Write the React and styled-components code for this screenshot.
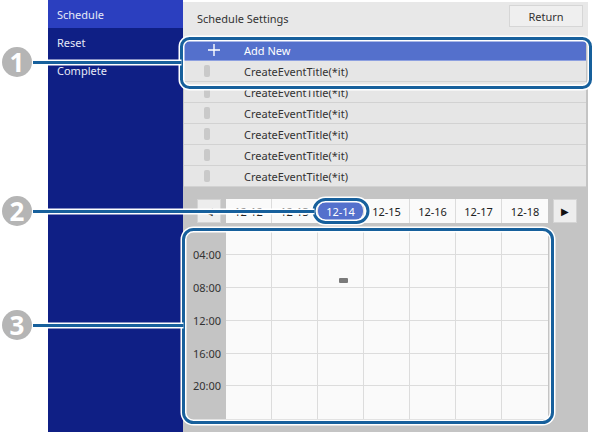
import React from "react";
import styled, { createGlobalStyle } from "styled-components";

const GlobalStyle = createGlobalStyle`
  html, body {
    margin: 0;
    padding: 0;
    background: #fff;
  }
  body {
    font-family: "Noto Sans", "Open Sans", sans-serif;
  }
`;

const days = ["12-12", "12-13", "12-14", "12-15", "12-16", "12-17", "12-18"];
const times = ["04:00", "08:00", "12:00", "16:00", "20:00"];
const rowHeights = [24, 33, 33, 33, 32, 33];

// Page
const Page = styled.div`
  position: relative;
  width: 596px;
  height: 434px;
  display: flex;
  overflow: hidden;
`;

const Gutter = styled.div`
  width: 48px;
  flex-shrink: 0;
`;

// Sidebar
const Sidebar = styled.nav`
  width: 135px;
  height: 432px;
  flex-shrink: 0;
  background: #0f1f85;
  display: flex;
  flex-direction: column;
`;

const NavItem = styled.div`
  height: 28px;
  padding-left: 9px;
  display: flex;
  align-items: center;
  font-size: 11px;
  color: #e6e9f7;
  background: ${(p) => (p.$active ? "#2b3fbf" : "transparent")};
`;

// Main panel
const Main = styled.main`
  width: 405px;
  height: 430px;
  flex-shrink: 0;
  border-top: 2px solid #fff;
  background: #c4c4c4;
  display: flex;
  flex-direction: column;
`;

const Header = styled.div`
  height: 36px;
  background: #e8e8e8;
  display: flex;
  align-items: flex-start;
  justify-content: space-between;
  padding: 3px 5px 0 14px;
  box-sizing: border-box;
`;

const Title = styled.div`
  padding-top: 6px;
  line-height: 16px;
  font-size: 11px;
  color: #333;
`;

const ReturnButton = styled.div`
  width: 74px;
  height: 22px;
  box-sizing: border-box;
  background: #efefef;
  border: 1px solid #d6d6d6;
  display: flex;
  align-items: center;
  justify-content: center;
  font-size: 11px;
  color: #333;
`;

const List = styled.div`
  margin: 2px 2px 0 1px;
  display: flex;
  flex-direction: column;
`;

const ListRow = styled.div`
  height: 20px;
  border-bottom: 1px solid ${(p) => (p.$accent ? "#8da0e0" : "#d2d2d2")};
  background: ${(p) => (p.$accent ? "#5470cc" : "#e6e6e6")};
  color: ${(p) => (p.$accent ? "#fff" : "#333")};
  display: flex;
  align-items: center;
  font-size: 11px;
`;

const Marker = styled.span`
  width: 6px;
  height: 12px;
  margin-left: 20px;
  margin-right: 34px;
  border-radius: 2px;
  background: #c9c9c9;
`;

const PlusIcon = styled.svg`
  margin-left: 24px;
  margin-right: 24px;
`;

// Calendar
const Calendar = styled.div`
  padding-top: 12px;
  display: flex;
  flex-direction: column;
`;

const DateBar = styled.div`
  display: flex;
  align-items: center;
  margin-left: 14px;
  gap: 5px;
  height: 24px;
`;

const ArrowButton = styled.div`
  width: 24px;
  height: 24px;
  box-sizing: border-box;
  background: #ededed;
  border: 1px solid #d4d4d4;
  display: flex;
  align-items: center;
  justify-content: center;
  font-size: 10px;
  color: #111;
`;

const DateStrip = styled.div`
  display: flex;
  height: 24px;
  background: #fafafa;
`;

const DateCell = styled.div`
  width: 46px;
  box-sizing: border-box;
  border-right: 1px solid #dcdcdc;
  display: flex;
  align-items: center;
  justify-content: center;
  font-size: 11px;
  color: #222;
  &:last-child {
    border-right: none;
  }
`;

const DatePill = styled.span`
  width: 45px;
  height: 18px;
  border-radius: 8px;
  background: #5470cc;
  color: #fff;
  display: flex;
  align-items: center;
  justify-content: center;
`;

const GridWrap = styled.div`
  margin-top: 8px;
  display: flex;
`;

const TimeColumn = styled.div`
  width: 43px;
  display: flex;
  flex-direction: column;
`;

const TimeSlot = styled.div`
  position: relative;
  height: ${(p) => p.$h}px;
`;

const TimeLabel = styled.span`
  position: absolute;
  right: 5px;
  bottom: 0;
  transform: translateY(50%);
  font-size: 11px;
  color: #333;
  line-height: 14px;
`;

const Grid = styled.div`
  display: grid;
  grid-template-columns: repeat(7, 46px);
  grid-template-rows: ${rowHeights.map((h) => h + "px").join(" ")};
  background: #fafafa;
`;

const Cell = styled.div`
  position: relative;
  box-sizing: border-box;
  border-right: ${(p) => (p.$lastCol ? "none" : "1px solid #dcdcdc")};
  border-bottom: ${(p) => (p.$lastRow ? "none" : "1px solid #dcdcdc")};
`;

const Event = styled.span`
  position: absolute;
  left: 21px;
  top: 23px;
  width: 9px;
  height: 5px;
  background: #7a7a7a;
  border-radius: 1px;
`;

// Callouts
const Overlay = styled.svg`
  position: absolute;
  left: 0;
  top: 0;
  pointer-events: none;
`;

const Callout = ({ y, n }) => (
  <g>
    <circle cx="17" cy={y} r="15" fill="#b5b5b5" />
    <text
      x="17"
      y={y + 9.5}
      textAnchor="middle"
      fontFamily="Open Sans, sans-serif"
      fontWeight="700"
      fontSize="26"
      fill="#fff"
    >
      {n}
    </text>
  </g>
);

const Frame = ({ d }) => (
  <g fill="none">
    <path d={d} stroke="#fff" strokeWidth="6" />
    <path d={d} stroke="#17609c" strokeWidth="3" />
  </g>
);

export default function App() {
  const events = ["Add New", ...Array(6).fill("CreateEventTitle(*it)")];

  return (
    <>
      <GlobalStyle />
      <Page>
        <Gutter />
        <Sidebar>
          <NavItem $active>Schedule</NavItem>
          <NavItem>Reset</NavItem>
          <NavItem>Complete</NavItem>
        </Sidebar>
        <Main>
          <Header>
            <Title>Schedule Settings</Title>
            <ReturnButton>Return</ReturnButton>
          </Header>
          <List>
            {events.map((e, i) =>
              i === 0 ? (
                <ListRow key={i} $accent>
                  <PlusIcon width="12" height="12" viewBox="0 0 12 12">
                    <path d="M6 0v12M0 6h12" stroke="#fff" strokeWidth="1.4" />
                  </PlusIcon>
                  {e}
                </ListRow>
              ) : (
                <ListRow key={i}>
                  <Marker />
                  {e}
                </ListRow>
              )
            )}
          </List>
          <Calendar>
            <DateBar>
              <ArrowButton>◀</ArrowButton>
              <DateStrip>
                {days.map((d, i) => (
                  <DateCell key={d}>{i === 2 ? <DatePill>{d}</DatePill> : d}</DateCell>
                ))}
              </DateStrip>
              <ArrowButton>▶</ArrowButton>
            </DateBar>
            <GridWrap>
              <TimeColumn>
                {rowHeights.map((h, i) => (
                  <TimeSlot key={i} $h={h}>
                    {times[i] && <TimeLabel>{times[i]}</TimeLabel>}
                  </TimeSlot>
                ))}
              </TimeColumn>
              <Grid>
                {rowHeights.map((_, r) =>
                  days.map((_, c) => (
                    <Cell key={r + "-" + c} $lastCol={c === 6} $lastRow={r === 5}>
                      {r === 1 && c === 2 && <Event />}
                    </Cell>
                  ))
                )}
              </Grid>
            </GridWrap>
          </Calendar>
        </Main>
        <Overlay width="596" height="434" viewBox="0 0 596 434">
          <Frame d="M189.5 38.5h393a8 8 0 0 1 8 8v33a8 8 0 0 1-8 8h-393a8 8 0 0 1-8-8v-33a8 8 0 0 1 8-8z" />
          <Frame d="M33 62.5h148.5" />
          <Frame d="M325.5 199.5h31a11 11 0 0 1 0 23h-31a11 11 0 0 1 0-23z" />
          <Frame d="M33 211.5h281.5" />
          <Frame d="M193.5 229.5h349a10 10 0 0 1 10 10v173a10 10 0 0 1-10 10h-349a10 10 0 0 1-10-10v-173a10 10 0 0 1 10-10z" />
          <Frame d="M33 325.5h150.5" />
          <Callout y={62} n="1" />
          <Callout y={211} n="2" />
          <Callout y={325} n="3" />
        </Overlay>
      </Page>
    </>
  );
}
